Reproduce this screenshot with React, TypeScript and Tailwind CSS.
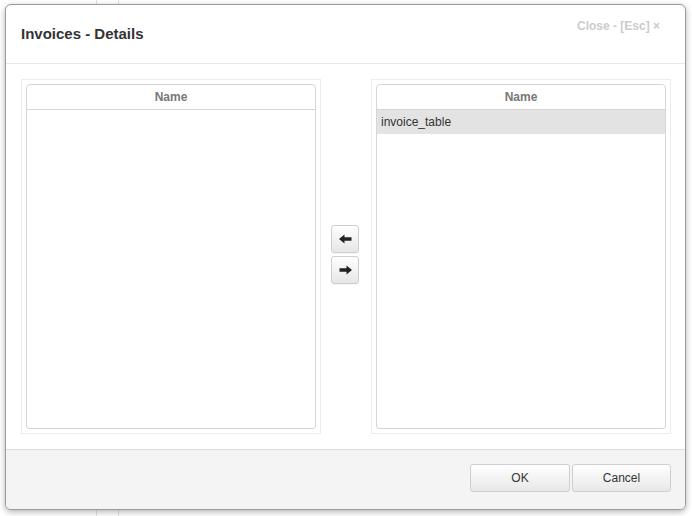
import React from 'react';

function ListPanel({ rows }: { rows: string[] }) {
  return (
    <div className="w-[300px] border border-[#ececec] p-[4px]">
      <div className="h-[345px] border border-[#d6d6d6] rounded-t-[4px] rounded-b-[3px] bg-white">
        <div className="h-[25px] border-b border-[#d6d6d6] flex items-center justify-center text-[12px] font-bold text-[#777]">
          Name
        </div>
        {rows.map((r) => (
          <div key={r} className="h-[24px] bg-[#e3e3e3] flex items-center pl-[4px] text-[12px] text-[#333]">
            {r}
          </div>
        ))}
      </div>
    </div>
  );
}

function ArrowButton({ dir }: { dir: 'left' | 'right' }) {
  return (
    <button className="w-[28px] h-[28px] rounded-[3px] border border-[#cfcfcf] bg-gradient-to-b from-[#ffffff] to-[#e6e6e6] flex items-center justify-center shadow-[0_1px_1px_rgba(0,0,0,0.05)]">
      <svg width="13" height="10" viewBox="0 0 13 10" className={dir === 'right' ? 'rotate-180' : ''}>
        <path d="M0 5 L5.5 0.5 L5.5 3.2 L12.5 3.2 L12.5 6.8 L5.5 6.8 L5.5 9.5 Z" fill="#222" />
      </svg>
    </button>
  );
}

export default function App() {
  return (
    <div className="relative w-[692px] h-[516px] bg-white overflow-hidden font-['Liberation_Sans',Arial,sans-serif]">
      {/* page behind the dialog */}
      <div className="absolute left-[96px] top-0 w-px h-full bg-[#e2e2e2]" />
      <div className="absolute left-[118px] top-0 w-px h-full bg-[#e2e2e2]" />

      <div className="absolute left-[5px] top-[4px] w-[681px] h-[506px] bg-white border border-[#9a9a9a] rounded-[6px] shadow-[0_2px_6px_rgba(0,0,0,0.3)] flex flex-col overflow-hidden">
        <div className="h-[59px] border-b border-[#e8e8e8] flex items-start justify-between pl-[15px] pr-[25px]">
          <h1 className="mt-[18px] text-[15px] font-bold text-[#333]">Invoices - Details</h1>
          <span className="mt-[12px] text-[12px] font-bold text-[#ccc]">Close - [Esc] ×</span>
        </div>

        <div className="flex-1 flex items-start pt-[15px] pl-[15px]">
          <ListPanel rows={[]} />
          <div className="w-[50px] self-stretch flex flex-col items-start pl-[10px] gap-[3px] pt-[146px]">
            <ArrowButton dir="left" />
            <ArrowButton dir="right" />
          </div>
          <ListPanel rows={['invoice_table']} />
        </div>

        <div className="h-[60px] border-t border-[#dcdcdc] bg-[#f4f4f4] flex items-center justify-end gap-[2px] pr-[14px] pb-[4px]">
          <button className="w-[100px] h-[28px] rounded-[3px] border border-[#cfcfcf] bg-gradient-to-b from-[#ffffff] to-[#e8e8e8] text-[12px] text-[#333]">
            OK
          </button>
          <button className="w-[99px] h-[28px] rounded-[3px] border border-[#cfcfcf] bg-gradient-to-b from-[#ffffff] to-[#e8e8e8] text-[12px] text-[#333]">
            Cancel
          </button>
        </div>
      </div>
    </div>
  );
}
